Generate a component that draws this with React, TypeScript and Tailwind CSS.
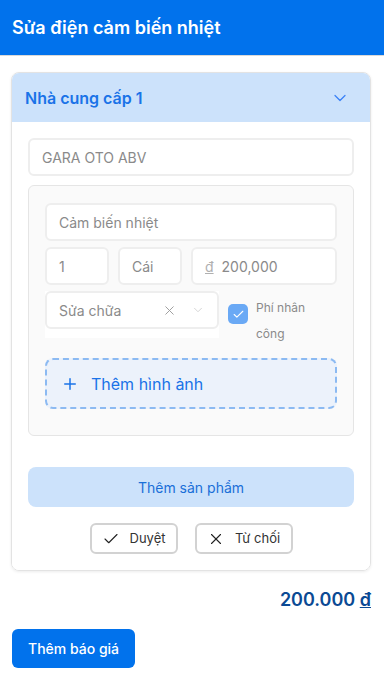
import { ChevronDown, X, Check, Plus } from 'lucide-react';

export default function App() {
    return (
        <div className="w-[384px] min-h-[696px] bg-white font-['Inter',sans-serif]">
            <div className="h-[56px] bg-[#0172ec] flex items-center px-3 border-b border-[#d9d9d9]">
                <h1 className="text-white text-[18px] font-semibold">Sửa điện cảm biến nhiệt</h1>
            </div>

            <div className="pl-[11px] pr-[13px] pt-4">
                <div className="rounded-lg border border-[#e3e3e3] shadow-[0_1px_3px_rgba(0,0,0,0.08)] overflow-hidden">
                    <div className="h-[49px] bg-[#cce2fb] flex items-center justify-between pl-[13px] pr-5">
                        <span className="text-[#1a73e8] text-[16px] font-semibold">Nhà cung cấp 1</span>
                        <ChevronDown className="w-5 h-5 text-[#3b82f6]" strokeWidth={1.5} />
                    </div>

                    <div className="pl-4 pr-4 pt-4 pb-4 bg-white">
                        <div className="h-[38px] rounded-md border-2 border-[#eeeeee] flex items-center px-3 text-[14px] text-[#8a8a8a]">
                            GARA OTO ABV
                        </div>

                        <div className="mt-[9px] rounded-md border border-[#e5e5e5] bg-[#fafafa] px-4 pt-[17px] pb-[26px]">
                            <div className="h-[38px] rounded-md border-2 border-[#eeeeee] bg-white flex items-center px-3 text-[14px] text-[#8a8a8a]">
                                Cảm biến nhiệt
                            </div>
                            <div className="mt-[6px] flex gap-[9px]">
                                <div className="w-[64px] h-[38px] rounded-md border-2 border-[#eeeeee] bg-white flex items-center px-3 text-[14px] text-[#8a8a8a]">1</div>
                                <div className="w-[64px] h-[38px] rounded-md border-2 border-[#eeeeee] bg-white flex items-center px-3 text-[14px] text-[#8a8a8a]">Cái</div>
                                <div className="flex-1 h-[38px] rounded-md border-2 border-[#eeeeee] bg-white flex items-center px-3 text-[14px] text-[#8a8a8a]">
                                    <span className="underline text-[#b0b0b0] mr-2">đ</span>200,000
                                </div>
                            </div>
                            <div className="mt-[6px] h-[47px] flex gap-[9px]">
                                <div className="w-[174px] h-[47px] bg-white">
                                    <div className="h-[38px] rounded-md border-2 border-[#eeeeee] bg-white flex items-center pl-3 pr-3 text-[14px] text-[#8a8a8a]">
                                        <span className="flex-1">Sửa chữa</span>
                                        <X className="w-[15px] h-[15px] text-[#9a9a9a]" strokeWidth={1.5} />
                                        <ChevronDown className="w-[14px] h-[14px] text-[#cfcfcf] ml-[14px]" strokeWidth={1.5} />
                                    </div>
                                </div>
                                <div className="flex items-start gap-2 pt-[8px]">
                                    <div className="mt-[5px] w-5 h-5 rounded-[5px] bg-[#6aa9f5] flex items-center justify-center">
                                        <Check className="w-[13px] h-[13px] text-white" strokeWidth={2} />
                                    </div>
                                    <div className="text-[12px] leading-[26px] text-[#8a8a8a] -mt-[4px]">Phí nhân<br />công</div>
                                </div>
                            </div>
                            <div className="mt-[20px] h-[51px] rounded-lg border-2 border-dashed border-[#8cbaf2] bg-[#ecf2fb] flex items-center px-[14px] gap-[12px]">
                                <Plus className="w-[18px] h-[18px] text-[#1a73e8]" strokeWidth={2} />
                                <span className="text-[16px] text-[#1a73e8]">Thêm hình ảnh</span>
                            </div>
                        </div>

                        <div className="mt-[31px] h-[40px] rounded-lg bg-[#cce2fb] flex items-center justify-center text-[14px] text-[#1a6fd8]">
                            Thêm sản phẩm
                        </div>

                        <div className="mt-[16px] flex justify-center gap-[17px]">
                            <div className="w-[88px] h-[31px] rounded-md border-2 border-[#d2d2d2] flex items-center justify-center gap-[10px] text-[13px] text-[#333]">
                                <Check className="w-[18px] h-[18px] text-[#222]" strokeWidth={1.5} />
                                Duyệt
                            </div>
                            <div className="w-[98px] h-[31px] rounded-md border-2 border-[#d2d2d2] flex items-center justify-center gap-[10px] text-[13px] text-[#333]">
                                <X className="w-[18px] h-[18px] text-[#222]" strokeWidth={1.5} />
                                Từ chối
                            </div>
                        </div>
                    </div>
                </div>

                <div className="mt-[15px] text-right text-[18px] font-semibold text-[#0b4a94]">
                    200.000 <span className="underline">đ</span>
                </div>
            </div>

            <div className="px-3 mt-[16px]">
                <button className="h-[39px] px-4 rounded-md bg-[#0172ec] text-white text-[14px] font-medium">
                    Thêm báo giá
                </button>
            </div>
        </div>
    );
}
